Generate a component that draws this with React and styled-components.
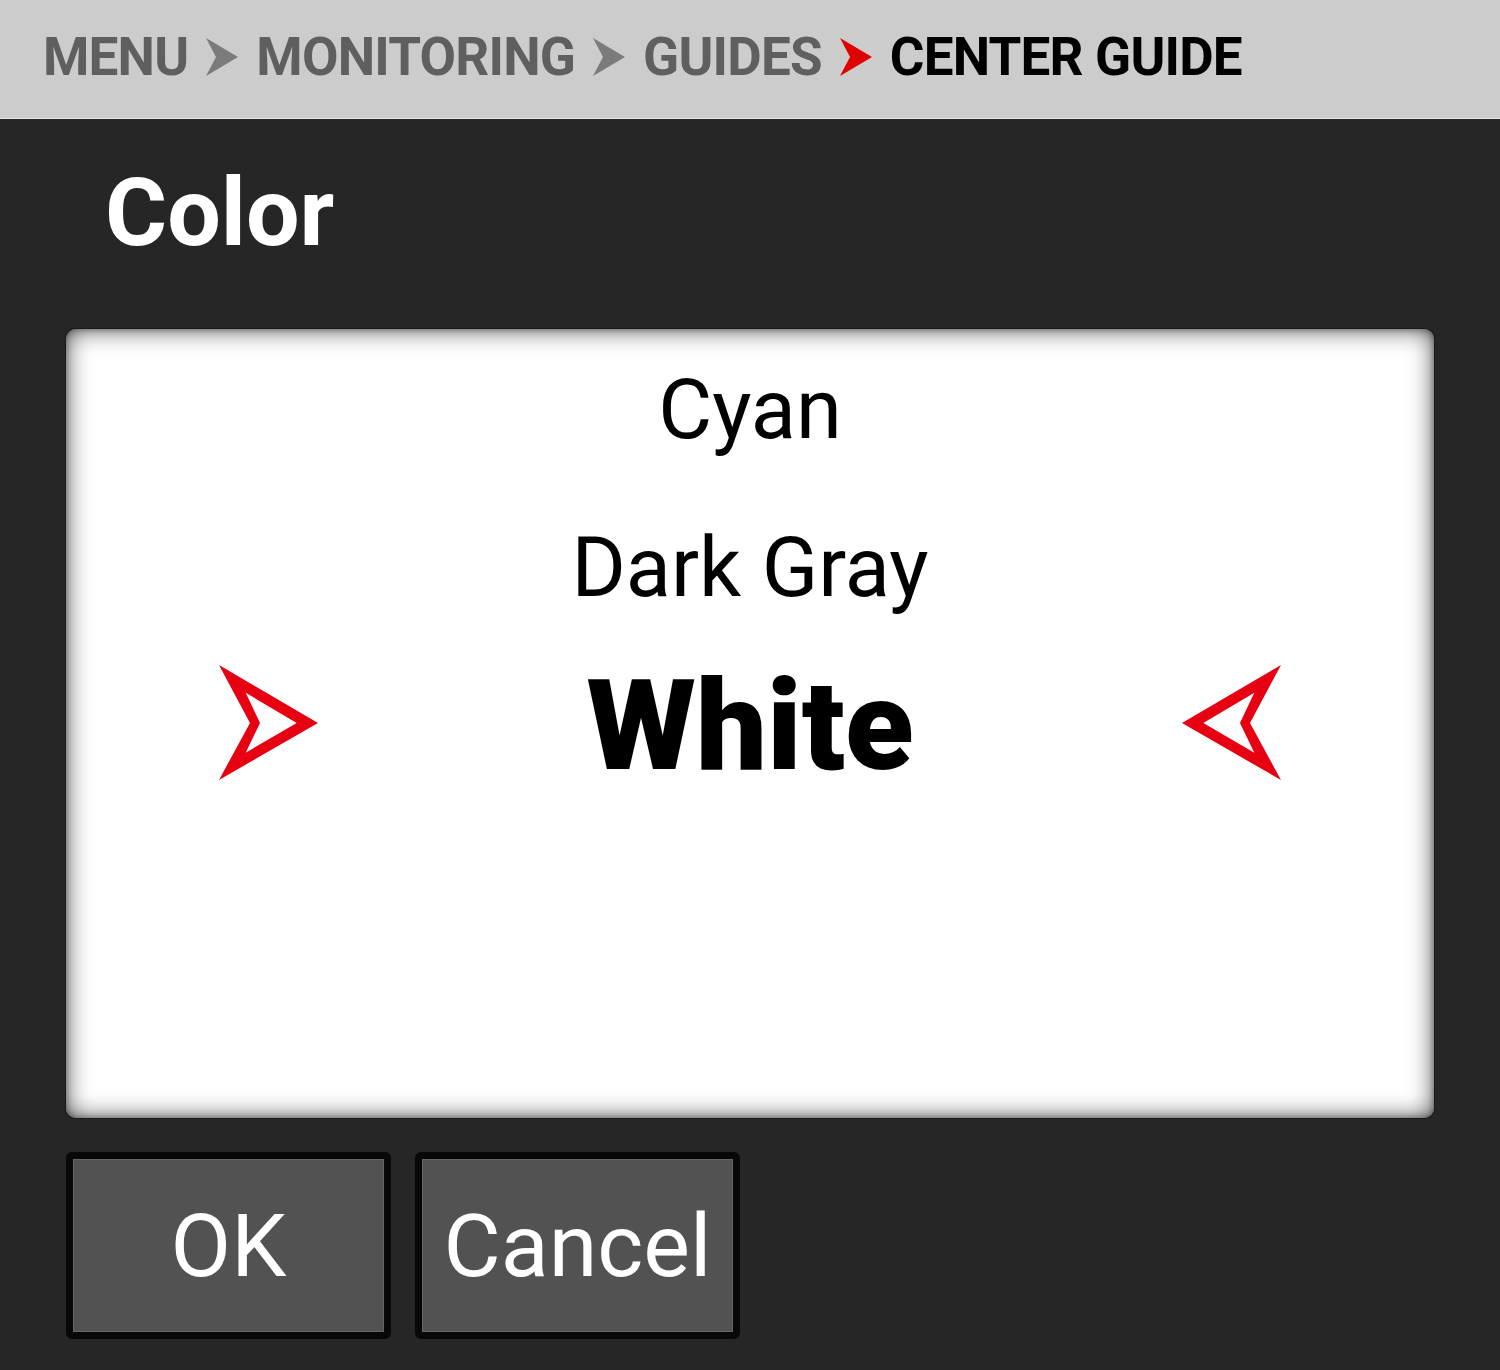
import React from "react";
import styled, { createGlobalStyle } from "styled-components";

const Global = createGlobalStyle`
  html, body { margin: 0; padding: 0; background: #262626; }
  body { font-family: Roboto, "Noto Sans", "Liberation Sans", sans-serif; }
  #root { width: 1500px; height: 1370px; }
`;

const Page = styled.div`
  width: 1500px;
  height: 1370px;
  display: flex;
  flex-direction: column;
  background: #262626;
  overflow: hidden;
`;

const Header = styled.header`
  height: 119px;
  flex: none;
  background: #cccccc;
  border-bottom: 1px solid #e4e4e4;
  display: flex;
  align-items: center;
  padding: 0 0 4px 43px;
  box-sizing: border-box;
  gap: 18px;
`;

const Crumb = styled.span`
  font-family: Roboto, "Liberation Sans", sans-serif;
  font-weight: 700;
  font-size: 53px;
  letter-spacing: -0.8px;
  line-height: 1;
  color: ${(p) => (p.$current ? "#000000" : "#5f5f5f")};
  white-space: nowrap;
`;

const ChevronSvg = styled.svg`
  flex: none;
  display: block;
`;

const Chevron = ({ color }) => (
  <ChevronSvg viewBox="0 0 32 38" width="32" height="38">
    <polygon points="0,0 32,19 0,38 10,19" fill={color} />
  </ChevronSvg>
);

const Body = styled.main`
  flex: 1;
  display: flex;
  flex-direction: column;
  padding: 46px 66px 0 66px;
`;

const Title = styled.h1`
  margin: 0 0 68px 39px;
  font-family: Roboto, "Liberation Sans", sans-serif;
  font-weight: 700;
  font-size: 95px;
  line-height: 96px;
  height: 96px;
  color: #ffffff;
`;

const Picker = styled.section`
  height: 789px;
  box-sizing: border-box;
  background: #ffffff;
  border-radius: 10px;
  box-shadow: inset 0 0 24px rgba(0, 0, 0, 0.7), inset 0 0 6px rgba(0, 0, 0, 0.4),
    0 0 0 1px #1a1a1a;
  padding-top: 2px;
  display: flex;
  flex-direction: column;
`;

const Option = styled.div`
  height: 158px;
  flex: none;
  display: flex;
  align-items: center;
  justify-content: space-between;
  padding: 0 153px;
  font-family: Roboto, "Liberation Sans", sans-serif;
  font-size: ${(p) => (p.$selected ? "126px" : "83px")};
  font-weight: ${(p) => (p.$selected ? 900 : 400)};
  line-height: 158px;
  color: #000000;
`;

const OptionLabel = styled.span`
  flex: 1;
  text-align: center;
  white-space: nowrap;
`;

const ArrowSvg = styled.svg`
  flex: none;
  display: block;
  margin-top: -7px;
  transform: ${(p) => (p.$flip ? "scaleX(-1)" : "none")};
`;

const Arrow = ({ flip }) => (
  <ArrowSvg $flip={flip} viewBox="0 0 100 116" width="100" height="116">
    <path
      fillRule="evenodd"
      fill="#e60012"
      d="M0 0 L99 58 L0 115 L31 58 Z M26.7 27.7 L41 58 L26.7 87.7 L77.7 58 Z"
    />
  </ArrowSvg>
);

const Spacer = styled.div`
  width: 100px;
  flex: none;
`;

const Buttons = styled.div`
  display: flex;
  gap: 24px;
  margin-top: 34px;
`;

const Button = styled.button`
  width: 325px;
  height: 187px;
  box-sizing: border-box;
  background: #525252;
  border: 7px solid #080808;
  border-radius: 6px;
  box-shadow: inset 0 0 0 1px #666666;
  color: #ffffff;
  font-family: Roboto, "Liberation Sans", sans-serif;
  font-weight: 400;
  font-size: 88px;
  line-height: 1;
  display: flex;
  align-items: center;
  justify-content: center;
  padding: 0;
  cursor: pointer;
`;

export default function App() {
  return (
    <Page>
      <Global />
      <Header>
        <Crumb>MENU</Crumb>
        <Chevron color="#7b7b7b" />
        <Crumb>MONITORING</Crumb>
        <Chevron color="#7b7b7b" />
        <Crumb>GUIDES</Crumb>
        <Chevron color="#e00000" />
        <Crumb $current>CENTER GUIDE</Crumb>
      </Header>
      <Body>
        <Title>Color</Title>
        <Picker>
          <Option>
            <Spacer />
            <OptionLabel>Cyan</OptionLabel>
            <Spacer />
          </Option>
          <Option>
            <Spacer />
            <OptionLabel>Dark Gray</OptionLabel>
            <Spacer />
          </Option>
          <Option $selected>
            <Arrow />
            <OptionLabel>White</OptionLabel>
            <Arrow flip />
          </Option>
        </Picker>
        <Buttons>
          <Button>OK</Button>
          <Button>Cancel</Button>
        </Buttons>
      </Body>
    </Page>
  );
}
